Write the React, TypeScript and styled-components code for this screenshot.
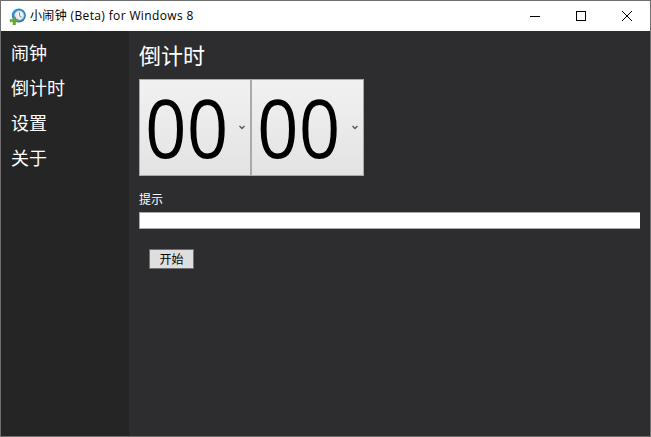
import React from "react";
import styled, { createGlobalStyle } from "styled-components";

const Global = createGlobalStyle`
  html, body { margin: 0; padding: 0; width: 651px; height: 437px; overflow: hidden; background: #2d2d2f; }
  #root { width: 651px; height: 437px; }
`;
const FONT = `"Noto Sans CJK SC", "Open Sans", sans-serif`;

const Frame = styled.div`
  box-sizing: border-box; width: 651px; height: 437px; border: 1px solid #707070;
  display: flex; flex-direction: column; font-family: ${FONT}; overflow: hidden;
`;
const TitleBar = styled.div`
  height: 30px; flex: none; background: #fff; display: flex; align-items: center; padding-left: 8px;
`;
const AppTitle = styled.span`
  margin-left: 4px; font: 12px/16px "Open Sans", "Noto Sans CJK SC", sans-serif; letter-spacing: 0.36px; color: #000; white-space: nowrap; flex: 1;
`;
const WinButton = styled.div`
  width: 46px; height: 30px; display: flex; align-items: center; justify-content: center; color: #000;
`;
const Body = styled.div`
  flex: 1; display: flex; min-height: 0;
`;
const Sidebar = styled.nav`
  width: 128px; flex: none; background: #252525; padding: 9px 0 0 10px; box-sizing: border-box;
  display: flex; flex-direction: column; gap: 11px;
`;
const NavItem = styled.div`
  font-size: 18px; line-height: 24px; color: #fff;
`;
const Content = styled.main`
  flex: 1; background: #2d2d2f; padding: 8px 10px 0 10px; min-width: 0;
`;
const Heading = styled.h1`
  margin: 0; font-weight: 400; font-size: 22px; line-height: 30px; color: #fff;
`;
const Pickers = styled.div`
  display: flex; margin-top: 10px; width: 225px;
`;
const Picker = styled.div`
  box-sizing: border-box; width: 112px; height: 97px; border: 1px solid #a9a9a9;
  background: linear-gradient(#f1f1f1, #e3e3e3);
  display: flex; align-items: center; position: relative; color: #000;
  & + & { width: 113px; }
`;
const Digits = styled.span`
  font: 80px/97px "Open Sans", sans-serif; margin-left: 5px; color: #000; margin-top: -3px;
  transform: scaleX(0.91); transform-origin: left;
`;
const Chevron = styled.svg`
  position: absolute; right: 5px; top: 45px; width: 6px; height: 5px; color: #555;
`;
const Label = styled.div`
  margin-top: 14px; font-size: 12px; line-height: 17px; color: #fff;
`;
const Input = styled.input`
  display: block; box-sizing: border-box; width: 501px; height: 17px; margin: 5px 0 0; border: 1px solid #a9a9a9; border-width: 1px 0 1px 1px; background: #fff; padding: 0; outline: none;
`;
const ActionButton = styled.button`
  display: block; box-sizing: border-box; width: 45px; height: 20px; margin: 20px 0 0 10px; padding: 0;
  border: 1px solid #707070; background: #dedede; color: #000; font: 12px/16px ${FONT};
`;

const AppIcon = () => (
  <svg width="17" height="17" viewBox="0 0 17 17" style={{ flex: "none" }}>
    <defs>
      <radialGradient id="face" cx="0.55" cy="0.4" r="0.6">
        <stop offset="0" stopColor="#ffffff" />
        <stop offset="1" stopColor="#cfd8e0" />
      </radialGradient>
      <linearGradient id="ring" x1="0" y1="0" x2="1" y2="1">
        <stop offset="0" stopColor="#1f9be8" />
        <stop offset="1" stopColor="#1c6fc0" />
      </linearGradient>
    </defs>
    <circle cx="9.800" cy="7.500" r="7" fill="url(#ring)" />
    <circle cx="10.200" cy="7.500" r="5" fill="url(#face)" stroke="#8a97a3" strokeWidth="0.6" />
    <path d="M10.500 4.500V7.800L12.500 9" fill="none" stroke="#6c7780" strokeWidth="0.9" />
    <path d="M4 9h2.500v2.400H9v2.300H6.500V17H4v-3.300H1v-2.300h3z" fill="#6aa82f" stroke="#4d8a1f" strokeWidth="0.4" />
  </svg>
);

export default function App() {
  return (
    <>
      <Global />
      <Frame>
        <TitleBar>
          <AppIcon />
          <AppTitle>小闹钟 (Beta) for Windows 8</AppTitle>
          <WinButton>
            <svg width="10" height="10" viewBox="0 0 10 10"><path d="M0 5.500H10" stroke="currentColor" strokeWidth="1" /></svg>
          </WinButton>
          <WinButton>
            <svg width="10" height="10" viewBox="0 0 10 10"><rect x="0.5" y="0.5" width="9" height="9" fill="none" stroke="currentColor" /></svg>
          </WinButton>
          <WinButton>
            <svg width="10" height="10" viewBox="0 0 10 10"><path d="M0 0L10 10M10 0L0 10" stroke="currentColor" strokeWidth="1" /></svg>
          </WinButton>
        </TitleBar>
        <Body>
          <Sidebar>
            <NavItem>闹钟</NavItem>
            <NavItem>倒计时</NavItem>
            <NavItem>设置</NavItem>
            <NavItem>关于</NavItem>
          </Sidebar>
          <Content>
            <Heading>倒计时</Heading>
            <Pickers>
              {[0, 1].map((i) => (
                <Picker key={i}>
                  <Digits>00</Digits>
                  <Chevron viewBox="0 0 6 5"><path d="M0.500 1L3 3.500L5.500 1" fill="none" stroke="currentColor" strokeWidth="1.300" /></Chevron>
                </Picker>
              ))}
            </Pickers>
            <Label>提示</Label>
            <Input readOnly />
            <ActionButton>开始</ActionButton>
          </Content>
        </Body>
      </Frame>
    </>
  );
}
